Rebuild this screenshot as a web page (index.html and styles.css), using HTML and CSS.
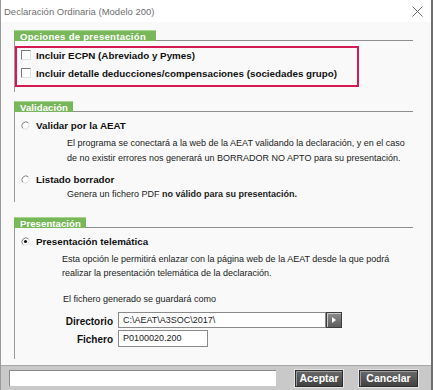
FILE: index.html
```html
<!DOCTYPE html>
<html lang="es">
<head>
    <meta charset="UTF-8">
    <meta name="viewport" content="width=device-width, initial-scale=1.0">
    <title>Declaración Ordinaria (Modelo 200)</title>
    <link rel="stylesheet" href="styles.css">
</head>
<body>
<div class="window">

    <div class="titlebar">
        <span class="title">Declaración Ordinaria (Modelo 200)</span>
        <svg class="close" width="11" height="11" viewBox="0 0 11 11">
            <path d="M0.5 0.5 L10.5 10.5 M10.5 0.5 L0.5 10.5" stroke="#6a6a6a" stroke-width="1" fill="none"/>
        </svg>
    </div>

    <div class="content">

        <!-- Opciones -->
        <section class="group">
            <div class="group-head">
                <span class="tab tab-options">Opciones de presentación</span>
                <span class="rule"></span>
            </div>
            <div class="group-body body-options">
                <div class="highlight">
                    <label class="opt"><span class="check"></span>Incluir ECPN (Abreviado y Pymes)</label>
                    <label class="opt"><span class="check"></span>Incluir detalle deducciones/compensaciones (sociedades grupo)</label>
                </div>
            </div>
        </section>

        <!-- Validación -->
        <section class="group group-valid">
            <div class="group-head">
                <span class="tab">Validación</span>
                <span class="rule"></span>
            </div>
            <div class="group-body body-valid">
                <label class="opt">
                    <svg class="radio" width="9" height="9" viewBox="0 0 9 9">
                        <circle cx="4.5" cy="4.5" r="4" fill="#fff"/>
                        <path d="M7.3 1.7 A4 4 0 0 0 1.7 7.3" stroke="#7d7d7d" fill="none"/>
                        <path d="M1.7 7.3 A4 4 0 0 0 7.3 1.7" stroke="#dcdcdc" fill="none"/>
                    </svg>
                    Validar por la AEAT
                </label>
                <p class="desc desc-valid">El programa se conectará a la web de la AEAT validando la declaración, y en el caso<br>de no existir errores nos generará un BORRADOR NO APTO para su presentación.</p>

                <label class="opt opt-next">
                    <svg class="radio" width="9" height="9" viewBox="0 0 9 9">
                        <circle cx="4.5" cy="4.5" r="4" fill="#fff"/>
                        <path d="M7.3 1.7 A4 4 0 0 0 1.7 7.3" stroke="#7d7d7d" fill="none"/>
                        <path d="M1.7 7.3 A4 4 0 0 0 7.3 1.7" stroke="#dcdcdc" fill="none"/>
                    </svg>
                    Listado borrador
                </label>
                <p class="desc desc-list">Genera un fichero PDF <b>no válido para su presentación.</b></p>
            </div>
        </section>

        <!-- Presentación -->
        <section class="group group-pres">
            <div class="group-head">
                <span class="tab">Presentación</span>
                <span class="rule"></span>
            </div>
            <div class="group-body body-pres">
                <label class="opt">
                    <svg class="radio" width="9" height="9" viewBox="0 0 9 9">
                        <circle cx="4.5" cy="4.5" r="4" fill="#fff"/>
                        <path d="M7.3 1.7 A4 4 0 0 0 1.7 7.3" stroke="#7d7d7d" fill="none"/>
                        <path d="M1.7 7.3 A4 4 0 0 0 7.3 1.7" stroke="#dcdcdc" fill="none"/>
                        <circle cx="4.5" cy="4.5" r="1.6" fill="#111"/>
                    </svg>
                    Presentación telemática
                </label>
                <p class="desc desc-pres">Esta opción le permitirá enlazar con la página web de la AEAT desde la que podrá<br>realizar la presentación telemática de la declaración.</p>

                <p class="desc desc-file">El fichero generado se guardará como</p>

                <div class="field">
                    <span class="field-label">Directorio</span>
                    <span class="input input-dir">C:\AEAT\A3SOC\2017\</span>
                    <span class="browse">
                        <svg width="8" height="8" viewBox="0 0 8 8"><path d="M2 1 L6 4 L2 7 Z" fill="#fff"/></svg>
                    </span>
                </div>
                <div class="field field-file">
                    <span class="field-label">Fichero</span>
                    <span class="input input-file">P0100020.200</span>
                </div>
            </div>
        </section>

    </div>

    <div class="footer">
        <div class="status"></div>
        <button type="button" class="btn btn-ok">Aceptar</button>
        <button type="button" class="btn btn-cancel">Cancelar</button>
    </div>

</div>
</body>
</html>
```

FILE: styles.css
```css
body {
    margin: 0;
    font-family: "Liberation Sans", Arial, sans-serif;
    background-color: #f9f9f9;
    color: #111;
}

.window {
    width: 433px;
    height: 390px;
    box-sizing: border-box;
    border-left: 1px solid #9a9a9a;
    border-right: 2px solid #6f6f6f;
    background-color: #f9f9f9;
    display: flex;
    flex-direction: column;
    overflow: hidden;
}

.titlebar {
    height: 22px;
    flex: none;
    background-color: #fff;
    display: flex;
    align-items: center;
    justify-content: space-between;
    padding: 0 8px 0 3px;
}

.title {
    font-size: 9.5px;
    color: #707070;
}

.close {
    display: block;
}

.content {
    flex: 1;
    padding: 8px 18px 5px 13px;
}

/* grupos */
.group-head {
    display: flex;
    align-items: flex-end;
    height: 11px;
}

.tab {
    height: 11px;
    line-height: 11px;
    padding: 0 5px 0 6px;
    background-color: #79b75b;
    border-top: 1px solid #a6d68e;
    box-sizing: border-box;
    color: #fff;
    font-weight: bold;
    font-size: 9.5px;
    letter-spacing: 0.1px;
    white-space: nowrap;
}

.tab-options {
    padding-right: 10px;
    letter-spacing: 0.3px;
}

.rule {
    flex: 1;
    height: 1px;
    background-color: #8e8e8e;
}

.group-body {
    border-left: 1px solid #9a9a9a;
}

.group-valid {
    margin-top: 9px;
}

.group-pres {
    margin-top: 15px;
}

.body-options {
    padding: 5px 0 5px 0;
}

.highlight {
    width: 344px;
    box-sizing: border-box;
    border: 2px solid #d41a52;
    padding: 0 0 5px 4px;
    display: flex;
    flex-direction: column;
    gap: 4px;
}

.opt {
    display: flex;
    align-items: center;
    height: 14px;
    font-size: 9.8px;
    font-weight: bold;
}

.check {
    width: 10px;
    height: 10px;
    box-sizing: border-box;
    margin-right: 5px;
    background-color: #fff;
    border: 1px solid;
    border-color: #7a7a7a #e2e2e2 #e2e2e2 #7a7a7a;
}

.radio {
    flex: none;
    margin-right: 6px;
}

.body-valid {
    padding: 6px 0 1px 6px;
}

.body-pres {
    padding: 6px 0 12px 6px;
}

.desc {
    margin: 0;
    font-size: 9px;
    line-height: 14px;
    color: #222;
}

.desc-valid {
    margin: 4px 0 0 46px;
    line-height: 15px;
}

.opt-next {
    margin-top: 6px;
}

.desc-list {
    margin: 1px 0 0 46px;
}

.desc-pres {
    margin: 4px 0 0 41px;
}

.desc-file {
    margin: 12px 0 0 42px;
}

/* campos */
.field {
    display: flex;
    align-items: center;
    margin-top: 6px;
}

.field-file {
    margin-top: 2px;
}

.field-label {
    width: 92px;
    text-align: right;
    font-size: 10px;
    font-weight: bold;
    margin-right: 5px;
    padding-top: 2px;
}

.input {
    height: 16px;
    box-sizing: border-box;
    background-color: #fff;
    border: 1px solid #8a8a8a;
    font-size: 9px;
    line-height: 14px;
    padding-left: 4px;
    color: #222;
}

.input-dir {
    width: 208px;
}

.input-file {
    width: 90px;
    height: 17px;
}

.browse {
    width: 16px;
    height: 16px;
    box-sizing: border-box;
    background: linear-gradient(#8d8d8d, #5e5e5e);
    border: 1px solid #3c3c3c;
    box-shadow: inset 1px 1px 0 #c8c8c8;
    display: flex;
    align-items: center;
    justify-content: center;
}

.browse svg {
    display: block;
}

/* pie */
.footer {
    height: 25px;
    flex: none;
    background-color: #c9c9c9;
    border-top: 1px solid #a8a8a8;
    box-sizing: border-box;
    display: flex;
    align-items: center;
    padding: 0 0 0 8px;
}

.status {
    width: 266px;
    height: 15px;
    background-color: #fff;
    border-top: 1px solid #8a8a8a;
    border-left: 1px solid #8a8a8a;
    margin-right: 19px;
}

.btn {
    height: 17px;
    padding: 0;
    border: 1px solid #2e2e2e;
    box-shadow: inset 1px 1px 0 #9a9a9a, 0 0 0 1px #e4e4e4;
    background: linear-gradient(#6a6a6a, #414141);
    color: #fff;
    font-family: "Liberation Sans", Arial, sans-serif;
    font-size: 10.5px;
    font-weight: bold;
    cursor: pointer;
}

.btn-ok {
    width: 48px;
}

.btn-cancel {
    width: 59px;
    margin-left: 16px;
}
```
